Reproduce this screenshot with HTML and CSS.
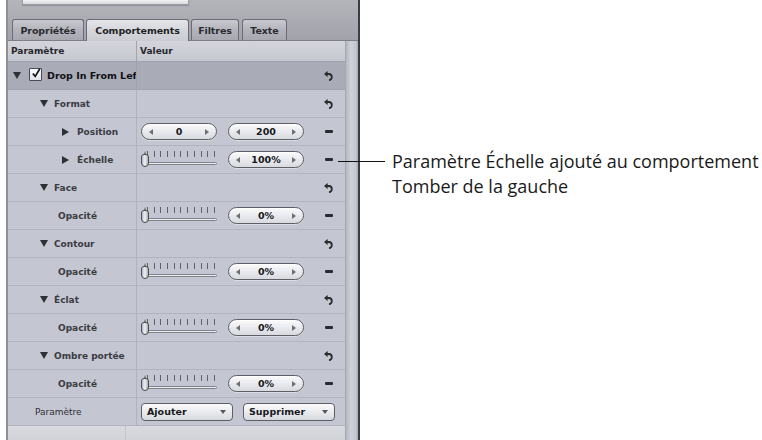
FILE: index.html
```html
<!DOCTYPE html>
<html lang="fr">
<head>
<meta charset="utf-8">
<title>Comportements</title>
<link rel="stylesheet" href="styles.css">
</head>
<body>
<div class="page">
  <div class="panel">
    <div class="top">
      <div class="scrub"></div>
      <div class="tabs">
        <div class="tab t1">Propriétés</div>
        <div class="tab t2 active">Comportements</div>
        <div class="tab t3">Filtres</div>
        <div class="tab t4">Texte</div>
      </div>
    </div>
    <div class="body">
      <div class="table">
        <div class="thead">
          <div class="hcell">Paramètre</div>
          <div class="hcell">Valeur</div>
        </div>

        <div class="row group">
          <div class="lab l0"><span class="tri down"></span><span class="chk"><svg width="11" height="11" viewBox="0 0 11 11"><path d="M2 5.5 L4.6 8.6 L9.6 0.5" stroke="#111" stroke-width="1.8" fill="none"/></svg></span><span class="name">Drop In From Left</span></div>
          <div class="val"><span class="undo"><svg width="9" height="10" viewBox="0 0 9 10"><path d="M0 3 L3.6 0 V6 Z" fill="#2a2a2a"/><path d="M3 3 H4.8 A3 3 0 0 1 7.8 6 A3 3 0 0 1 5 9.2" stroke="#2a2a2a" stroke-width="1.8" fill="none"/></svg></span></div>
        </div>

        <div class="row">
          <div class="lab l1"><span class="tri down"></span>Format</div>
          <div class="val"><span class="undo"><svg width="9" height="10" viewBox="0 0 9 10"><path d="M0 3 L3.6 0 V6 Z" fill="#2a2a2a"/><path d="M3 3 H4.8 A3 3 0 0 1 7.8 6 A3 3 0 0 1 5 9.2" stroke="#2a2a2a" stroke-width="1.8" fill="none"/></svg></span></div>
        </div>

        <div class="row">
          <div class="lab l2"><span class="tri right"></span>Position</div>
          <div class="val">
            <div class="step"><span class="al"></span><b>0</b><span class="ar"></span></div>
            <div class="step"><span class="al"></span><b>200</b><span class="ar"></span></div>
            <span class="minus"></span>
          </div>
        </div>

        <div class="row">
          <div class="lab l2"><span class="tri right"></span>Échelle</div>
          <div class="val">
            <div class="slider"><span class="ticks"></span><span class="track"></span><span class="knob"></span></div>
            <div class="step"><span class="al"></span><b>100%</b><span class="ar"></span></div>
            <span class="minus"></span>
          </div>
        </div>

        <div class="row">
          <div class="lab l1"><span class="tri down"></span>Face</div>
          <div class="val"><span class="undo"><svg width="9" height="10" viewBox="0 0 9 10"><path d="M0 3 L3.6 0 V6 Z" fill="#2a2a2a"/><path d="M3 3 H4.8 A3 3 0 0 1 7.8 6 A3 3 0 0 1 5 9.2" stroke="#2a2a2a" stroke-width="1.8" fill="none"/></svg></span></div>
        </div>
        <div class="row">
          <div class="lab l3">Opacité</div>
          <div class="val">
            <div class="slider"><span class="ticks"></span><span class="track"></span><span class="knob"></span></div>
            <div class="step"><span class="al"></span><b>0%</b><span class="ar"></span></div>
            <span class="minus"></span>
          </div>
        </div>

        <div class="row">
          <div class="lab l1"><span class="tri down"></span>Contour</div>
          <div class="val"><span class="undo"><svg width="9" height="10" viewBox="0 0 9 10"><path d="M0 3 L3.6 0 V6 Z" fill="#2a2a2a"/><path d="M3 3 H4.8 A3 3 0 0 1 7.8 6 A3 3 0 0 1 5 9.2" stroke="#2a2a2a" stroke-width="1.8" fill="none"/></svg></span></div>
        </div>
        <div class="row">
          <div class="lab l3">Opacité</div>
          <div class="val">
            <div class="slider"><span class="ticks"></span><span class="track"></span><span class="knob"></span></div>
            <div class="step"><span class="al"></span><b>0%</b><span class="ar"></span></div>
            <span class="minus"></span>
          </div>
        </div>

        <div class="row">
          <div class="lab l1"><span class="tri down"></span>Éclat</div>
          <div class="val"><span class="undo"><svg width="9" height="10" viewBox="0 0 9 10"><path d="M0 3 L3.6 0 V6 Z" fill="#2a2a2a"/><path d="M3 3 H4.8 A3 3 0 0 1 7.8 6 A3 3 0 0 1 5 9.2" stroke="#2a2a2a" stroke-width="1.8" fill="none"/></svg></span></div>
        </div>
        <div class="row">
          <div class="lab l3">Opacité</div>
          <div class="val">
            <div class="slider"><span class="ticks"></span><span class="track"></span><span class="knob"></span></div>
            <div class="step"><span class="al"></span><b>0%</b><span class="ar"></span></div>
            <span class="minus"></span>
          </div>
        </div>

        <div class="row">
          <div class="lab l1"><span class="tri down"></span>Ombre portée</div>
          <div class="val"><span class="undo"><svg width="9" height="10" viewBox="0 0 9 10"><path d="M0 3 L3.6 0 V6 Z" fill="#2a2a2a"/><path d="M3 3 H4.8 A3 3 0 0 1 7.8 6 A3 3 0 0 1 5 9.2" stroke="#2a2a2a" stroke-width="1.8" fill="none"/></svg></span></div>
        </div>
        <div class="row">
          <div class="lab l3">Opacité</div>
          <div class="val">
            <div class="slider"><span class="ticks"></span><span class="track"></span><span class="knob"></span></div>
            <div class="step"><span class="al"></span><b>0%</b><span class="ar"></span></div>
            <span class="minus"></span>
          </div>
        </div>

        <div class="row">
          <div class="lab l4">Paramètre</div>
          <div class="val">
            <div class="pop p1"><b>Ajouter</b><span class="dd"></span></div>
            <div class="pop p2"><b>Supprimer</b><span class="dd"></span></div>
          </div>
        </div>

        <div class="foot"><div class="fl"></div></div>
      </div>
      <div class="vscroll"></div>
    </div>
  </div>

  <div class="callout">
    <p>Paramètre Échelle ajouté au comportement<br>Tomber de la gauche</p>
  </div>
</div>
</body>
</html>
```

FILE: styles.css
```css
* { box-sizing: border-box; }
html, body { margin: 0; padding: 0; background: #ffffff; }
body { width: 762px; height: 440px; overflow: hidden; font-family: "DejaVu Sans", "Liberation Sans", sans-serif; }

.page { display: flex; align-items: flex-start; }

.panel {
  margin-left: 6px;
  width: 354px;
  height: 440px;
  display: flex;
  flex-direction: column;
  border-left: 2px solid #8e9097;
  border-right: 2px solid #3c3d43;
  background: #c2c4ce;
}

/* top strip with tabs */
.top {
  height: 41px;
  background: linear-gradient(#b4b5bb, #a9aab1 60%, #a2a3aa);
  border-bottom: 1px solid #7e8089;
  display: flex;
  flex-direction: column;
}
.scrub {
  margin-left: 14px;
  width: 167px;
  height: 5px;
  background: linear-gradient(#f3f3f5, #d9dade);
  border: 1px solid #9a9ba2;
  border-top: none;
  box-shadow: 0 1px 1px rgba(0,0,0,0.15);
}
.tabs {
  margin-top: auto;
  display: flex;
  align-items: flex-end;
  padding-left: 4px;
  gap: 2px;
}
.tab {
  height: 21px;
  padding: 0 6px;
  display: flex;
  align-items: center;
  justify-content: center;
  font-size: 9.5px;
  font-weight: bold;
  color: #2a2b31;
  background: linear-gradient(#c9cad0, #b3b4bb 50%, #a7a8b0);
  border: 1px solid #6a6c75;
  border-bottom: none;
  border-radius: 3px 3px 0 0;
  letter-spacing: -0.1px;
}
.t1 { width: 72px; }
.t2 { width: 103px; }
.t3 { width: 48px; }
.t4 { width: 45px; margin-left: 1px; }
.tab.active {
  background: linear-gradient(#e4e5e9, #d3d4da 60%, #cbccd3);
  color: #1e1f24;
  height: 22px;
  margin-bottom: -1px;
}

/* body */
.body { flex: 1; display: flex; }
.table { width: 337px; display: flex; flex-direction: column; }
.vscroll {
  flex: 1;
  background: linear-gradient(90deg, #b4b6c0, #d0d2da 40%, #c6c8d1 80%, #a9abb4);
  border-left: 1px solid #a5a7b1;
}

.thead {
  height: 21px;
  display: grid;
  grid-template-columns: 129px 1fr;
  background: linear-gradient(#d4d5dc, #c6c8d0);
  border-bottom: 1px solid #9fa1ab;
}
.hcell {
  display: flex;
  align-items: center;
  padding-left: 3px;
  font-size: 9px;
  font-weight: bold;
  color: #26272c;
}
.hcell:first-child { border-right: 1px solid #a2a4ae; }

.row {
  height: 28px;
  display: grid;
  grid-template-columns: 129px 1fr;
  background: #c4c6d1;
  border-bottom: 1px solid #b2b4bf;
}
.row.group { background: #a9abb7; border-bottom-color: #a0a2ad; }

.lab {
  display: flex;
  align-items: center;
  border-right: 1px solid #b0b2bd;
  font-size: 9px;
  font-weight: bold;
  color: #3a3b41;
  white-space: nowrap;
  overflow: hidden;
}
.group .lab { border-right-color: #a0a2ad; }
.l0 { padding-left: 5px; }
.l1 { padding-left: 32px; }
.l2 { padding-left: 54px; }
.l3 { padding-left: 50px; }
.l4 { padding-left: 27px; font-weight: normal; color: #2e2f34; }
.l0 .name { font-size: 9.5px; color: #101014; margin-left: 5px; }

.tri { display: inline-block; width: 0; height: 0; margin-right: 6px; }
.tri.down { border-left: 4px solid transparent; border-right: 4px solid transparent; border-top: 7px solid #2f3035; }
.tri.right { border-top: 4px solid transparent; border-bottom: 4px solid transparent; border-left: 7px solid #2f3035; margin-right: 8px; }
.l0 .tri { margin-right: 8px; }

.chk {
  width: 13px; height: 13px;
  background: linear-gradient(#ffffff, #e3e4e8);
  border: 1px solid #4a4b52;
  border-radius: 1px;
  display: flex; align-items: flex-start; justify-content: center;
  margin-top: -2px;
}
.chk svg { margin-top: -1px; margin-left: 1px; }

.val {
  display: flex;
  align-items: center;
  padding-left: 4px;
  padding-right: 12px;
  gap: 11px;
}
.undo, .minus { margin-left: auto; }
.undo { display: flex; margin-right: 0; }
.minus {
  width: 8px; height: 3px;
  background: #2a2b30;
  border-radius: 1px;
}

/* stepper */
.step {
  width: 76px;
  height: 17px;
  border: 1px solid #5d5f67;
  border-radius: 9px;
  background: linear-gradient(#fbfbfc, #e9eaee 50%, #d9dae0);
  box-shadow: inset 0 1px 0 #ffffff, 0 1px 0 rgba(255,255,255,0.4);
  display: flex;
  align-items: center;
  padding: 0 7px;
}
.step b {
  flex: 1;
  text-align: center;
  font-size: 9.5px;
  color: #16171b;
}
.al, .ar { width: 0; height: 0; border-top: 3px solid transparent; border-bottom: 3px solid transparent; }
.al { border-right: 4px solid #6d6f77; }
.ar { border-left: 4px solid #6d6f77; }

/* slider */
.slider {
  width: 76px;
  height: 22px;
  display: flex;
  flex-direction: column;
  justify-content: flex-start;
  position: relative;
}
.ticks {
  margin-left: 6px;
  margin-top: 2px;
  width: 68px;
  height: 6px;
  background: repeating-linear-gradient(90deg, #606269 0 1px, transparent 1px 6.7px);
}
.track {
  margin-left: 4px;
  margin-top: 5px;
  width: 72px;
  height: 3px;
  border: 1px solid #7f818a;
  border-radius: 2px;
  background: #eceef2;
}
.knob {
  position: absolute;
  left: 0;
  top: 5px;
  width: 8px;
  height: 13px;
  border: 1px solid #4c4e55;
  border-radius: 3px 3px 4px 4px;
  background: linear-gradient(90deg, #b9bbc2, #f1f2f4 50%, #a9abb2);
}
.knob::before {
  content: "";
  position: absolute;
  left: 2px; top: -4px;
  width: 0; height: 0;
  border-left: 1.5px solid transparent;
  border-right: 1.5px solid transparent;
  border-bottom: 4px solid #4c4e55;
}

/* popup buttons */
.pop {
  height: 18px;
  width: 92px;
  border: 1px solid #5d5f67;
  border-radius: 4px;
  background: linear-gradient(#fbfbfc, #eaebee 50%, #d8d9df);
  display: flex;
  align-items: center;
  padding: 0 6px 0 5px;
}
.pop b { flex: 1; font-size: 9.5px; color: #17181c; }
.p2 { margin-left: -1px; }
.dd { width: 0; height: 0; border-left: 3px solid transparent; border-right: 3px solid transparent; border-top: 4px solid #55575e; }

.foot {
  flex: 1;
  background: linear-gradient(#d9dadf, #d2d3d9);
  display: grid;
  grid-template-columns: 118px 1fr;
}
.fl { border-right: 1px solid #c4c5cc; }

/* callout */
.callout {
  margin-top: 149px;
  margin-left: 32px;
  position: relative;
}
.callout::before {
  content: "";
  position: absolute;
  left: -54px;
  top: 12px;
  width: 47px;
  height: 1px;
  background: #111;
}
.callout p {
  margin: 0;
  font-family: "Open Sans", "Noto Sans", sans-serif;
  font-size: 18px;
  line-height: 25px;
  color: #1a1a1a;
  white-space: nowrap;
}
```
